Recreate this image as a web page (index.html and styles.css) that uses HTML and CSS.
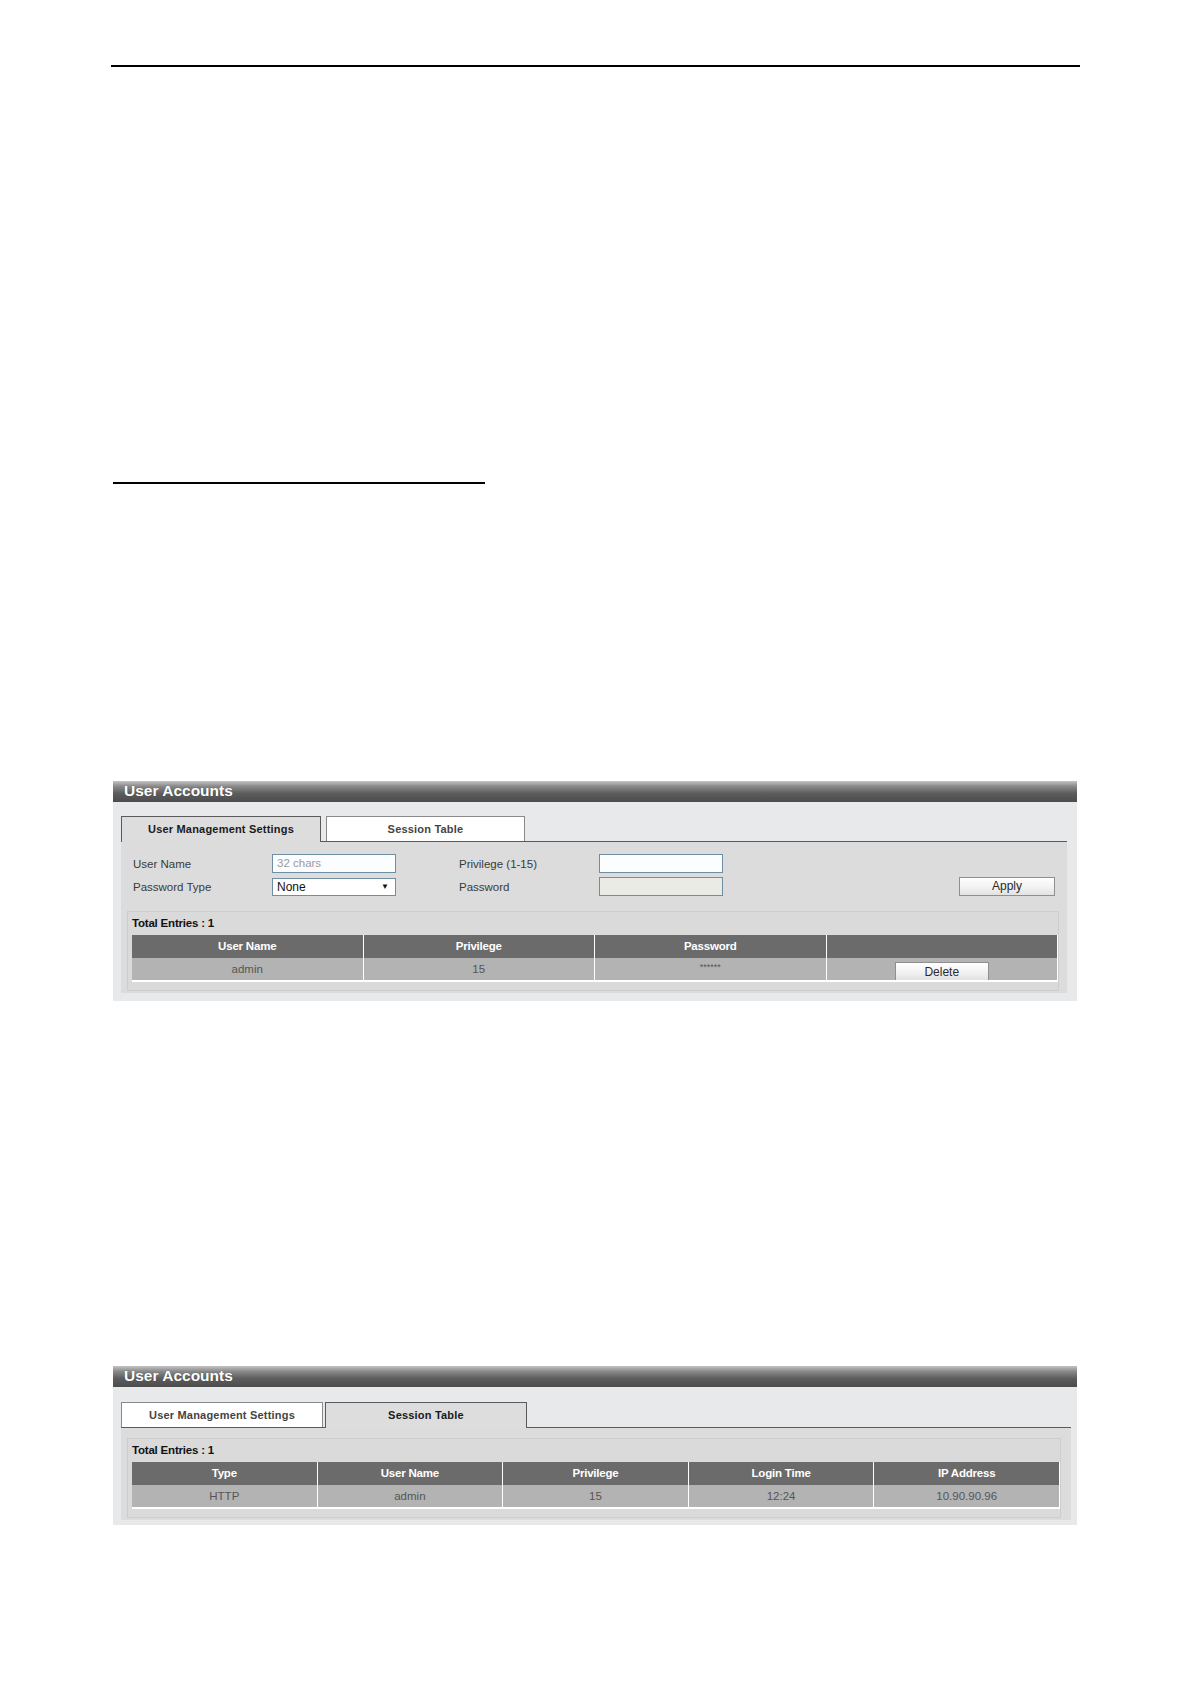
FILE: index.html
```html
<!DOCTYPE html>
<html>
<head>
<meta charset="utf-8">
<title>User Accounts</title>
<link rel="stylesheet" href="styles.css">
</head>
<body>
<div class="page">
  <div class="rule-top"></div>
  <div class="rule-short"></div>

  <div class="panel panel-one">
    <div class="panel-head">User Accounts</div>
    <div class="panel-body">
      <div class="tabs">
        <div class="tab tab-active tab-wide1">User Management Settings</div>
        <div class="tab tab-wide2">Session Table</div>
      </div>
      <div class="content">
        <div class="form">
          <div class="form-row">
            <span class="label">User Name</span>
            <span class="field field-text placeholder">32 chars</span>
            <span class="label label-second">Privilege (1-15)</span>
            <span class="field field-text"></span>
          </div>
          <div class="form-row">
            <span class="label">Password Type</span>
            <span class="field field-select"><span>None</span><span class="arrow">&#9660;</span></span>
            <span class="label label-second">Password</span>
            <span class="field field-text field-disabled"></span>
            <span class="spacer"></span>
            <span class="btn btn-apply">Apply</span>
          </div>
        </div>
        <div class="entries">
          <div class="entries-title">Total Entries : 1</div>
          <div class="grid grid-4">
            <div class="th">User Name</div>
            <div class="th">Privilege</div>
            <div class="th">Password</div>
            <div class="th"></div>
            <div class="td">admin</div>
            <div class="td">15</div>
            <div class="td td-stars">******</div>
            <div class="td td-btn"><span class="btn btn-delete">Delete</span></div>
          </div>
        </div>
      </div>
    </div>
  </div>

  <div class="panel panel-two">
    <div class="panel-head">User Accounts</div>
    <div class="panel-body panel-body-two">
      <div class="tabs tabs-two">
        <div class="tab tab-wide1b">User Management Settings</div>
        <div class="tab tab-active tab-wide2b">Session Table</div>
      </div>
      <div class="content content-two">
        <div class="entries entries-two">
          <div class="entries-title">Total Entries : 1</div>
          <div class="grid grid-5">
            <div class="th">Type</div>
            <div class="th">User Name</div>
            <div class="th">Privilege</div>
            <div class="th">Login Time</div>
            <div class="th">IP Address</div>
            <div class="td">HTTP</div>
            <div class="td">admin</div>
            <div class="td">15</div>
            <div class="td">12:24</div>
            <div class="td">10.90.90.96</div>
          </div>
        </div>
      </div>
    </div>
  </div>
</div>
</body>
</html>
```

FILE: styles.css
```css
html, body {
  margin: 0;
  padding: 0;
  background: #ffffff;
}

body {
  font-family: "Liberation Sans", Arial, sans-serif;
  color: #333333;
}

.page {
  width: 974px;
  margin-left: 111px;
  padding-top: 65px;
  padding-bottom: 40px;
}

.rule-top {
  width: 969px;
  height: 2px;
  background: #000000;
}

.rule-short {
  width: 372px;
  height: 2px;
  margin-left: 2px;
  margin-top: 415px;
  background: #000000;
}

.panel {
  width: 964px;
  margin-left: 2px;
  background: #e7e9ea;
}

.panel-one {
  margin-top: 297px;
}

.panel-two {
  margin-top: 365px;
}

.panel-head {
  height: 21px;
  line-height: 20px;
  padding-left: 11px;
  font-size: 15.5px;
  font-weight: bold;
  color: #ffffff;
  text-shadow: 0 0 1px rgba(0, 0, 0, 0.4);
  background: linear-gradient(to bottom, #c4c4c4 0%, #8a8a8a 25%, #5c5c5c 60%, #4c4c4c 100%);
}

.panel-body {
  padding: 14px 10px 8px 8px;
}

.panel-body-two {
  padding-top: 15px;
  padding-bottom: 5px;
}

.tabs {
  display: flex;
  gap: 5px;
  height: 25px;
  position: relative;
  z-index: 1;
}

.tabs-two {
  gap: 2px;
}

.tab {
  box-sizing: border-box;
  height: 25px;
  line-height: 24px;
  text-align: center;
  font-size: 11px;
  font-weight: bold;
  letter-spacing: 0.2px;
  color: #444444;
  background: #ffffff;
  border: 1px solid #8a8a8a;
  border-bottom: none;
}

.tab-active {
  height: 26px;
  background: #dddddd;
  border-color: #5a5a5a;
  color: #1a1a1a;
}

.tab-wide1 { width: 200px; }
.tab-wide2 { width: 199px; }
.tab-wide1b { width: 202px; }
.tab-wide2b { width: 202px; }

.content {
  width: 946px;
  box-sizing: border-box;
  background: #dcdcdc;
  border-top: 1px solid #5a5a5a;
  padding: 12px 8px 2px 6px;
}

.content-two {
  width: 950px;
  padding-top: 10px;
  padding-right: 10px;
}

.form {
  padding-left: 6px;
  display: flex;
  flex-direction: column;
  gap: 4px;
}

.form-row {
  display: flex;
  align-items: center;
  height: 19px;
}

.label {
  width: 139px;
  font-size: 11.5px;
  color: #3a3a3a;
}

.label-second {
  width: 140px;
  margin-left: 63px;
}

.field {
  box-sizing: border-box;
  width: 124px;
  height: 19px;
  border: 1px solid #6f8ea3;
  background: #fcfdff;
  font-size: 11.5px;
  line-height: 17px;
  padding-left: 4px;
}

.placeholder {
  color: #9a9a9a;
}

.field-disabled {
  background: #ebebe6;
}

.field-select {
  height: 18px;
  line-height: 16px;
  display: flex;
  justify-content: space-between;
  padding-right: 6px;
  color: #111111;
  background: #ffffff;
  font-size: 12px;
}

.arrow {
  font-size: 8px;
}

.spacer {
  flex: 1;
}

.btn {
  box-sizing: border-box;
  display: inline-block;
  text-align: center;
  font-size: 12px;
  color: #2a2a2a;
  border: 1px solid #8f8f8f;
  background: linear-gradient(to bottom, #ffffff 0%, #f3f3f3 50%, #e2e2e2 100%);
}

.btn-apply {
  width: 96px;
  height: 19px;
  line-height: 17px;
  margin-right: 4px;
}

.entries {
  margin-top: 15px;
  box-sizing: border-box;
  border: 1px solid #cdcdcd;
  background: #dadada;
  padding: 0 0 8px 4px;
}

.entries-two {
  margin-top: 0;
  padding-bottom: 8px;
}

.entries-title {
  height: 23px;
  line-height: 22px;
  font-size: 11.5px;
  font-weight: bold;
  color: #111111;
  letter-spacing: -0.2px;
}

.grid {
  display: grid;
  background: #ffffff;
  gap: 0 1px;
  border-right: 1px solid #ffffff;
  border-bottom: 2px solid #ffffff;
}

.grid-4 {
  grid-template-columns: repeat(4, 1fr);
}

.grid-5 {
  grid-template-columns: repeat(5, 1fr);
}

.th {
  height: 23px;
  line-height: 23px;
  text-align: center;
  background: #6b6b6b;
  color: #ffffff;
  font-size: 11.5px;
  font-weight: bold;
  letter-spacing: -0.2px;
}

.td {
  height: 22px;
  line-height: 22px;
  text-align: center;
  background: #b3b3b3;
  color: #555555;
  font-size: 11.5px;
}

.td-stars {
  font-size: 9px;
  line-height: 19px;
}

.td-btn {
  display: flex;
  justify-content: center;
  align-items: flex-end;
}

.btn-delete {
  width: 94px;
  height: 18px;
  line-height: 19px;
  border-bottom: none;
}
```
